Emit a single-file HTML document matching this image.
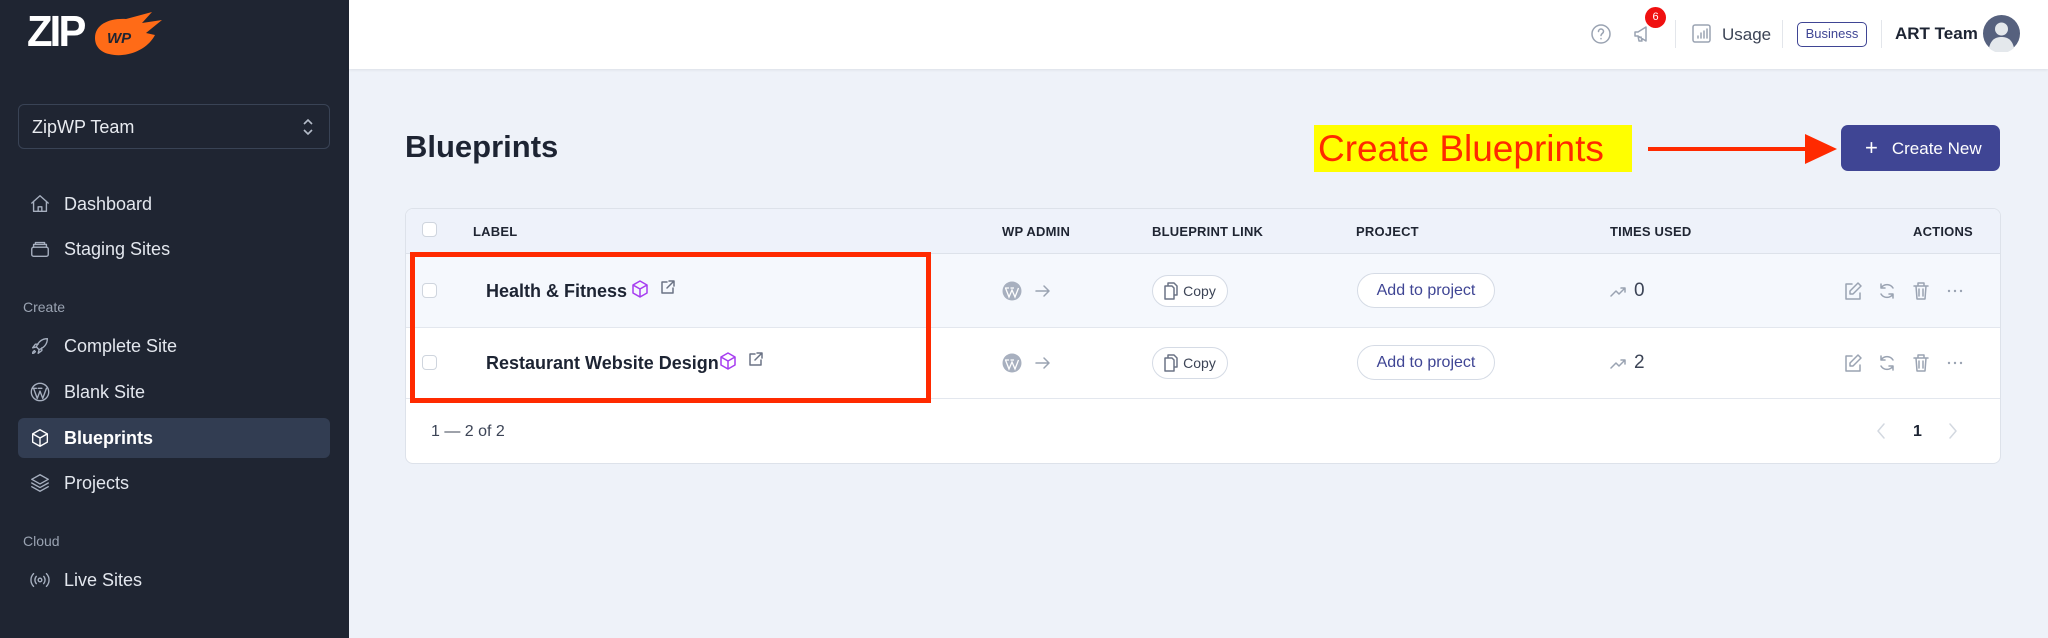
<!DOCTYPE html>
<html><head><meta charset="utf-8">
<style>
*{box-sizing:border-box;margin:0;padding:0}
body{width:2048px;height:638px;overflow:hidden;background:#eef2f9;font-family:"Liberation Sans",sans-serif;position:relative}
.a{position:absolute}
.side{left:0;top:0;width:349px;height:638px;background:#1f2532}
.nav{position:absolute;left:18px;width:312px;height:40px;display:flex;align-items:center;color:#e3e7ee;font-size:18px}
.nav svg{position:absolute;left:11px;width:22px;height:22px;fill:none;stroke:#a6afbf;stroke-width:1.5;stroke-linecap:round;stroke-linejoin:round}
.nav span{position:absolute;left:46px}
.sec{position:absolute;left:23px;color:#9aa3b2;font-size:14px}
.hdr{left:349px;top:0;width:1699px;height:69px;background:#fff;box-shadow:0 1px 3px rgba(0,0,0,.08)}
.th{position:absolute;top:224px;font-size:13px;color:#1f2532;font-weight:bold;letter-spacing:.2px}
.cb{position:absolute;width:15px;height:15px;border:1px solid #cfd5de;border-radius:4px;background:#fff}
.name{position:absolute;left:486px;font-size:18px;font-weight:bold;color:#1d2433}
.pill{position:absolute;border:1px solid #d5dbe5;border-radius:20px;background:#fff;font-size:14px;display:flex;align-items:center;justify-content:center}
.ic{position:absolute;fill:none;stroke:#9aa3b2;stroke-width:1.5;stroke-linecap:round;stroke-linejoin:round}
</style></head><body>
<div class="a side"></div>
<!-- logo -->
<div class="a" style="left:27px;top:7px;font-size:44px;font-weight:900;color:#fff;letter-spacing:-3px;transform:scaleX(0.95);transform-origin:left">ZIP</div>
<svg class="a" style="left:92px;top:10px" width="72" height="50" viewBox="0 0 72 50"><path d="M3 28C3 14 18 8 34 9L60 2 50 13 70 10 54 23 63 25C54 42 32 48 17 44 8 42 3 36 3 28Z" fill="#ff6b17"/><text x="15" y="33" font-size="15" font-weight="bold" font-style="italic" fill="#1f2532" font-family="Liberation Sans">WP</text></svg>
<div class="a" style="left:18px;top:104px;width:312px;height:45px;border:1px solid #394355;border-radius:6px;color:#e8ebf0;font-size:18px;padding:12px 0 0 13px">ZipWP Team</div>
<svg class="a" style="left:301px;top:117px" width="14" height="20" viewBox="0 0 14 20" fill="none" stroke="#b4bcc9" stroke-width="1.6"><path d="M3 7l4-4 4 4M3 13l4 4 4-4"/></svg>
<div class="nav" style="top:184px"><svg viewBox="0 0 24 24"><path d="M3 11l9-8 9 8M5 9v11h14V9M10 20v-5h4v5"/></svg><span>Dashboard</span></div>
<div class="nav" style="top:229px"><svg viewBox="0 0 24 24"><rect x="3" y="10" width="18" height="10" rx="2"/><path d="M5 10V7h14v3M7 7V5h10v2"/></svg><span>Staging Sites</span></div>
<div class="sec" style="top:299px">Create</div>
<div class="nav" style="top:326px"><svg viewBox="0 0 24 24"><path d="M20 4c-6 0-10 4-12 9l3 3c5-2 9-6 9-12zM8 13l-4 1 3-4h3M11 16l-1 4 4-3v-3M6 17c-2 1-2 3-2 3s2 0 3-2"/></svg><span>Complete Site</span></div>
<div class="nav" style="top:372px"><svg viewBox="0 0 24 24"><circle cx="12" cy="12" r="9.5"/><path d="M5 8l4 11 3-8 3 8 4-11M4 8h4M10 8h4"/></svg><span>Blank Site</span></div>
<div class="nav" style="top:418px;background:#323d52;border-radius:6px;font-weight:bold;color:#fff"><svg viewBox="0 0 24 24" style="stroke:#fff"><path d="M12 3l8 4.5v9L12 21l-8-4.5v-9zM4 7.5l8 4.5 8-4.5M12 12v9"/></svg><span>Blueprints</span></div>
<div class="nav" style="top:463px"><svg viewBox="0 0 24 24"><path d="M12 3l9 5-9 5-9-5zM3 12l9 5 9-5M3 16l9 5 9-5"/></svg><span>Projects</span></div>
<div class="sec" style="top:533px">Cloud</div>
<div class="nav" style="top:560px"><svg viewBox="0 0 24 24"><circle cx="12" cy="12" r="2"/><path d="M8 8a6 6 0 000 8M16 8a6 6 0 010 8M5 5a10 10 0 000 14M19 5a10 10 0 010 14"/></svg><span>Live Sites</span></div>

<!-- header -->
<div class="a hdr"></div>
<svg class="ic" style="left:1590px;top:23px" width="22" height="22" viewBox="0 0 22 22"><circle cx="11" cy="11" r="9"/><path d="M8.5 8.5a2.5 2.5 0 015 0c0 2-2.5 2-2.5 4M11 15.5v.3"/></svg>
<svg class="ic" style="left:1632px;top:23px" width="22" height="22" viewBox="0 0 22 22"><path d="M3 9v4h3l8 5V4L6 9zM6 13l1 5h3l-1-4"/></svg>
<div class="a" style="left:1645px;top:7px;width:21px;height:21px;border-radius:50%;background:#f01010;color:#fff;font-size:11px;text-align:center;line-height:21px">6</div>
<div class="a" style="left:1675px;top:20px;width:1px;height:28px;background:#e3e6eb"></div>
<svg class="ic" style="left:1692px;top:24px" width="19" height="19" viewBox="0 0 19 19"><rect x="1" y="1" width="17" height="17" rx="2"/><path d="M6 14v-2M9 14v-5M12 14V7M15 14V5"/></svg>
<div class="a" style="left:1722px;top:25px;font-size:17px;color:#3c4456">Usage</div>
<div class="a" style="left:1782px;top:20px;width:1px;height:28px;background:#e3e6eb"></div>
<div class="a" style="left:1797px;top:22px;width:70px;height:25px;border:1.5px solid #3f4594;border-radius:5px;color:#3f4594;font-size:13px;text-align:center;line-height:22px">Business</div>
<div class="a" style="left:1881px;top:20px;width:1px;height:28px;background:#e3e6eb"></div>
<div class="a" style="left:1895px;top:24px;font-size:17px;color:#1d2433;font-weight:bold">ART Team</div>
<svg class="a" style="left:1983px;top:15px" width="37" height="37" viewBox="0 0 37 37"><circle cx="18.5" cy="18.5" r="18.5" fill="#56617e"/><circle cx="18.5" cy="14" r="6.5" fill="#e4e8ec"/><path d="M6 33c2-9 7-11 12.5-11S29 24 31 33a18 18 0 01-25 0z" fill="#e4e8ec"/></svg>

<!-- title & annotation -->
<div class="a" style="left:405px;top:129px;font-size:31px;font-weight:bold;color:#1d2433">Blueprints</div>
<div class="a" style="left:1314px;top:125px;width:318px;height:47px;background:#ffff00"></div>
<div class="a" style="left:1318px;top:127px;font-size:37px;color:#ff2a00;line-height:44px">Create Blueprints</div>
<div class="a" style="left:1648px;top:147px;width:165px;height:4px;background:#ff2a00"></div>
<svg class="a" style="left:1805px;top:134px" width="32" height="30"><path d="M0 0L32 15 0 30z" fill="#ff2a00"/></svg>
<div class="a" style="left:1841px;top:125px;width:159px;height:46px;background:#3f4594;border-radius:7px;color:#fff;font-size:17px;line-height:46px;padding-left:24px"><span style="font-size:22px;font-weight:300;margin-right:14px;vertical-align:-1px">+</span>Create New</div>

<!-- card -->
<div class="a" style="left:405px;top:208px;width:1596px;height:256px;background:#fff;border:1px solid #dde2ea;border-radius:8px;overflow:hidden">
 <div class="a" style="left:0;top:0;width:100%;height:45px;background:#eef2fa;border-bottom:1px solid #dde2ea"></div>
 <div class="a" style="left:0;top:45px;width:100%;height:74px;background:#f5f8fd;border-bottom:1px solid #e3e7ee"></div>
 <div class="a" style="left:0;top:119px;width:100%;height:71px;border-bottom:1px solid #e3e7ee"></div>
</div>
<div class="cb" style="left:422px;top:222px"></div>
<div class="th" style="left:473px">LABEL</div>
<div class="th" style="left:1002px">WP ADMIN</div>
<div class="th" style="left:1152px">BLUEPRINT LINK</div>
<div class="th" style="left:1356px">PROJECT</div>
<div class="th" style="left:1610px">TIMES USED</div>
<div class="th" style="left:1913px">ACTIONS</div>

<!-- rows -->
<div class="cb" style="left:422px;top:283px"></div>
<div class="name" style="top:281px">Health &amp; Fitness</div>
<svg class="ic" style="left:631px;top:279px;stroke:#a63cf0" width="18" height="20" viewBox="0 0 18 20"><path d="M9 2l7 4v8l-7 4-7-4V6zM2 6l7 4 7-4M9 10v8"/></svg>
<svg class="ic" style="left:660px;top:279px;stroke:#6b7385" width="16" height="16" viewBox="0 0 16 16"><path d="M7 3H2v11h11V9M9 2h5v5M14 2L7 9"/></svg>
<div class="cb" style="left:422px;top:355px"></div>
<div class="name" style="top:353px">Restaurant Website Design</div>
<svg class="ic" style="left:719px;top:351px;stroke:#a63cf0" width="18" height="20" viewBox="0 0 18 20"><path d="M9 2l7 4v8l-7 4-7-4V6zM2 6l7 4 7-4M9 10v8"/></svg>
<svg class="ic" style="left:748px;top:351px;stroke:#6b7385" width="16" height="16" viewBox="0 0 16 16"><path d="M7 3H2v11h11V9M9 2h5v5M14 2L7 9"/></svg>

<!-- row cells -->
<svg class="a" style="left:1002px;top:281px" width="20" height="20" viewBox="0 0 20 20"><circle cx="10" cy="10" r="9.5" fill="#a8b0bf"/><path d="M3.5 7l3.5 9 3-7 3 7 3.5-9M3 7h4M8.5 7h3.5" stroke="#fff" stroke-width="1.3" fill="none"/></svg>
<svg class="ic" style="left:1034px;top:283px" width="18" height="16" viewBox="0 0 18 16"><path d="M2 8h13M10 3l5 5-5 5"/></svg>
<svg class="a" style="left:1002px;top:353px" width="20" height="20" viewBox="0 0 20 20"><circle cx="10" cy="10" r="9.5" fill="#a8b0bf"/><path d="M3.5 7l3.5 9 3-7 3 7 3.5-9M3 7h4M8.5 7h3.5" stroke="#fff" stroke-width="1.3" fill="none"/></svg>
<svg class="ic" style="left:1034px;top:355px" width="18" height="16" viewBox="0 0 18 16"><path d="M2 8h13M10 3l5 5-5 5"/></svg>

<div class="pill" style="left:1152px;top:275px;width:76px;height:32px;color:#3c4456"><svg class="ic" style="position:static;margin-right:5px;stroke:#6b7385" width="14" height="18" viewBox="0 0 14 18"><path d="M4 4V1h6l3 3v9H10M1 4h7l2 2v11H1z"/></svg>Copy</div>
<div class="pill" style="left:1152px;top:347px;width:76px;height:32px;color:#3c4456"><svg class="ic" style="position:static;margin-right:5px;stroke:#6b7385" width="14" height="18" viewBox="0 0 14 18"><path d="M4 4V1h6l3 3v9H10M1 4h7l2 2v11H1z"/></svg>Copy</div>
<div class="pill" style="left:1357px;top:273px;width:138px;height:35px;color:#3f4594;font-size:16px">Add to project</div>
<div class="pill" style="left:1357px;top:345px;width:138px;height:35px;color:#3f4594;font-size:16px">Add to project</div>

<svg class="ic" style="left:1610px;top:285px" width="16" height="12" viewBox="0 0 16 12"><path d="M1 11l5-5 3 3 6-6M11 3h4v4"/></svg>
<div class="a" style="left:1634px;top:280px;font-size:19px;color:#3c4456">0</div>
<svg class="ic" style="left:1610px;top:357px" width="16" height="12" viewBox="0 0 16 12"><path d="M1 11l5-5 3 3 6-6M11 3h4v4"/></svg>
<div class="a" style="left:1634px;top:352px;font-size:19px;color:#3c4456">2</div>

<!-- actions -->
<svg class="ic" style="left:1843px;top:281px" width="20" height="20" viewBox="0 0 20 20"><path d="M9 3H3v15h14v-6M15 2l3 3-8 8H7v-3z"/></svg>
<svg class="ic" style="left:1877px;top:281px" width="20" height="20" viewBox="0 0 20 20"><path d="M16 7a7 7 0 00-12 0M4 3v4h4M4 13a7 7 0 0012 0M16 17v-4h-4"/></svg>
<svg class="ic" style="left:1912px;top:281px" width="18" height="20" viewBox="0 0 18 20"><path d="M2 5h14M6 5V2h6v3M4 5l1 13h8l1-13M7 8v7M11 8v7"/></svg>
<svg class="a" style="left:1947px;top:289px" width="16" height="4"><circle cx="2" cy="2" r="1.2" fill="#9aa3b2"/><circle cx="8" cy="2" r="1.2" fill="#9aa3b2"/><circle cx="14" cy="2" r="1.2" fill="#9aa3b2"/></svg>
<svg class="ic" style="left:1843px;top:353px" width="20" height="20" viewBox="0 0 20 20"><path d="M9 3H3v15h14v-6M15 2l3 3-8 8H7v-3z"/></svg>
<svg class="ic" style="left:1877px;top:353px" width="20" height="20" viewBox="0 0 20 20"><path d="M16 7a7 7 0 00-12 0M4 3v4h4M4 13a7 7 0 0012 0M16 17v-4h-4"/></svg>
<svg class="ic" style="left:1912px;top:353px" width="18" height="20" viewBox="0 0 18 20"><path d="M2 5h14M6 5V2h6v3M4 5l1 13h8l1-13M7 8v7M11 8v7"/></svg>
<svg class="a" style="left:1947px;top:361px" width="16" height="4"><circle cx="2" cy="2" r="1.2" fill="#9aa3b2"/><circle cx="8" cy="2" r="1.2" fill="#9aa3b2"/><circle cx="14" cy="2" r="1.2" fill="#9aa3b2"/></svg>

<!-- footer -->
<div class="a" style="left:431px;top:423px;font-size:16px;color:#3c4456">1 — 2 of 2</div>
<svg class="ic" style="left:1876px;top:422px;stroke:#d3d8e0" width="10" height="18" viewBox="0 0 10 18"><path d="M8 2L2 9l6 7"/></svg>
<div class="a" style="left:1913px;top:423px;font-size:16px;color:#1d2433;font-weight:bold">1</div>
<svg class="ic" style="left:1948px;top:422px;stroke:#d3d8e0" width="10" height="18" viewBox="0 0 10 18"><path d="M2 2l6 7-6 7"/></svg>

<!-- red annotation box -->
<div class="a" style="left:410px;top:252px;width:521px;height:151px;border:5px solid #ff2a00"></div>
</body></html>
